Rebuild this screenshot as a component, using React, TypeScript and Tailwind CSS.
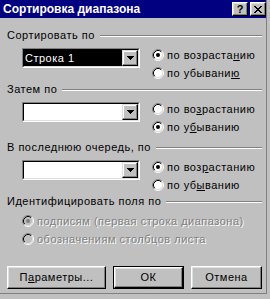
import React from "react";

function Radio({ checked, disabled }: { checked?: boolean; disabled?: boolean }) {
  return (
    <svg width="12" height="12" viewBox="0 0 12 12" className="shrink-0">
      <circle cx="6" cy="6" r="4.5" fill={disabled ? "#c0c0c0" : "#ffffff"} />
      <path d="M2.11 9.89A5.5 5.5 0 0 1 9.89 2.11" stroke="#808080" fill="none" />
      <path d="M9.89 2.11A5.5 5.5 0 0 1 2.11 9.89" stroke="#ffffff" fill="none" />
      <path d="M2.82 9.18A4.5 4.5 0 0 1 9.18 2.82" stroke="#000000" fill="none" />
      <path d="M9.18 2.82A4.5 4.5 0 0 1 2.82 9.18" stroke="#dfdfdf" fill="none" />
      {checked && <circle cx="6" cy="6" r="2" fill={disabled ? "#808080" : "#000000"} />}
    </svg>
  );
}

function RadioRow({
  checked,
  disabled,
  children,
}: {
  checked?: boolean;
  disabled?: boolean;
  children: React.ReactNode;
}) {
  return (
    <div className="flex items-center h-[18px] gap-[3px]">
      <Radio checked={checked} disabled={disabled} />
      <span
        className={
          disabled
            ? "whitespace-nowrap leading-[13px] text-[#808080] [text-shadow:1px_1px_0_#ffffff]"
            : "whitespace-nowrap leading-[13px]"
        }
      >
        {children}
      </span>
    </div>
  );
}

function GroupHeader({ className, children }: { className: string; children: React.ReactNode }) {
  return (
    <div className={"flex items-center pl-[7px] pr-[4px] h-[13px] " + className}>
      <span className="whitespace-nowrap leading-[13px]">{children}</span>
      <div className="flex-1 ml-[5px] h-[2px] border-t border-t-[#808080] border-b border-b-white" />
    </div>
  );
}

function Arrow() {
  return (
    <svg width="7" height="4" viewBox="0 0 7 4" shapeRendering="crispEdges">
      <rect x="0" y="0" width="7" height="1" fill="#000" />
      <rect x="1" y="1" width="5" height="1" fill="#000" />
      <rect x="2" y="2" width="3" height="1" fill="#000" />
      <rect x="3" y="3" width="1" height="1" fill="#000" />
    </svg>
  );
}

function Combo({ value }: { value?: string }) {
  return (
    <div className="mt-[2px] w-[118px] h-[20px] shrink-0 border border-t-[#808080] border-l-[#808080] border-r-white border-b-white">
      <div className="h-full w-full flex border border-t-black border-l-black border-r-[#dfdfdf] border-b-[#dfdfdf] bg-white">
        <div
          className={
            value
              ? "flex-1 flex items-center pl-[1px] bg-black text-white leading-[13px]"
              : "flex-1 flex items-center pl-[1px] leading-[13px]"
          }
        >
          {value}
        </div>
        <div className="w-[16px] h-full bg-[#c0c0c0] border border-t-[#dfdfdf] border-l-[#dfdfdf] border-r-black border-b-black shadow-[inset_-1px_-1px_0_#808080,inset_1px_1px_0_#ffffff] flex items-center justify-center">
          <Arrow />
        </div>
      </div>
    </div>
  );
}

function SortGroup({
  className,
  value,
  asc,
  ascLabel,
  descLabel,
}: {
  className: string;
  value?: string;
  asc: boolean;
  ascLabel: React.ReactNode;
  descLabel: React.ReactNode;
}) {
  return (
    <div className={"flex items-start pl-[22px] " + className}>
      <Combo value={value} />
      <div className="flex flex-col ml-[12px]">
        <RadioRow checked={asc}>{ascLabel}</RadioRow>
        <RadioRow checked={!asc}>{descLabel}</RadioRow>
      </div>
    </div>
  );
}

function Btn({
  className,
  isDefault,
  children,
}: {
  className: string;
  isDefault?: boolean;
  children: React.ReactNode;
}) {
  const face = (
    <div className="h-full w-full flex items-center justify-center border border-t-white border-l-white border-r-black border-b-black shadow-[inset_-1px_-1px_0_#808080,inset_1px_1px_0_#dfdfdf] bg-[#c0c0c0] leading-[13px]">
      {children}
    </div>
  );
  if (isDefault) {
    return <div className={"h-[23px] border border-black " + className}>{face}</div>;
  }
  return <div className={"h-[23px] " + className}>{face}</div>;
}

function CaptionBtn({ children }: { children: React.ReactNode }) {
  return (
    <div className="w-[16px] h-[14px] bg-[#c0c0c0] border border-t-white border-l-white border-r-black border-b-black shadow-[inset_-1px_-1px_0_#808080,inset_1px_1px_0_#dfdfdf] flex items-center justify-center">
      {children}
    </div>
  );
}

function CloseGlyph() {
  return (
    <svg width="8" height="7" viewBox="0 0 8 7" shapeRendering="crispEdges">
      <rect x="0" y="0" width="2" height="1" fill="#000" />
      <rect x="6" y="0" width="2" height="1" fill="#000" />
      <rect x="1" y="1" width="2" height="1" fill="#000" />
      <rect x="5" y="1" width="2" height="1" fill="#000" />
      <rect x="2" y="2" width="4" height="1" fill="#000" />
      <rect x="3" y="3" width="2" height="1" fill="#000" />
      <rect x="2" y="4" width="4" height="1" fill="#000" />
      <rect x="1" y="5" width="2" height="1" fill="#000" />
      <rect x="5" y="5" width="2" height="1" fill="#000" />
      <rect x="0" y="6" width="2" height="1" fill="#000" />
      <rect x="6" y="6" width="2" height="1" fill="#000" />
    </svg>
  );
}

export default function App() {
  return (
    <div className="w-[270px] h-[299px] bg-[#c0c0c0] overflow-hidden font-['Liberation_Sans',Arial,sans-serif] text-[11px] tracking-[0.5px] text-black">
      <div className="w-[267px] h-[294px] border-r border-b border-[#808080] flex flex-col">
        <div className="h-[18px] bg-[#000080] flex items-center justify-between pl-[3px]">
          <span className="text-white font-bold text-[12px] tracking-normal leading-[18px] whitespace-nowrap">
            Сортировка диапазона
          </span>
          <div className="flex items-center gap-[2px]">
            <CaptionBtn>
              <span className="font-bold text-[11px] tracking-normal leading-[11px] text-black">?</span>
            </CaptionBtn>
            <CaptionBtn>
              <CloseGlyph />
            </CaptionBtn>
          </div>
        </div>

        <GroupHeader className="mt-[11px]">Сортировать по</GroupHeader>
        <SortGroup
          className="mt-[4px]"
          value="Строка 1"
          asc={true}
          ascLabel={<>по возраста<u>н</u>ию</>}
          descLabel={<>по убывани<u>ю</u></>}
        />

        <GroupHeader className="mt-[1px]">Затем по</GroupHeader>
        <SortGroup
          className="mt-[4px]"
          asc={false}
          ascLabel={<>по во<u>з</u>растанию</>}
          descLabel={<>по у<u>б</u>ыванию</>}
        />

        <GroupHeader className="mt-[5px]">В последнюю очередь, по</GroupHeader>
        <SortGroup
          className="mt-[4px]"
          asc={true}
          ascLabel={<>по воз<u>р</u>астанию</>}
          descLabel={<>по уб<u>ы</u>ванию</>}
        />

        <GroupHeader className="mt-[1px]">Идентифицировать поля по</GroupHeader>
        <div className="flex flex-col pl-[22px] mt-[4px]">
          <RadioRow checked disabled>
            подписям (первая строка диапазона)
          </RadioRow>
          <RadioRow disabled>обозначениям столбцов листа</RadioRow>
        </div>

        <div className="flex items-center pl-[7px] mt-[18px] gap-[7px]">
          <Btn className="w-[99px]">
            П<u>а</u>раметры...
          </Btn>
          <Btn className="w-[71px]" isDefault>
            ОК
          </Btn>
          <Btn className="w-[71px]">Отмена</Btn>
        </div>
      </div>
    </div>
  );
}
